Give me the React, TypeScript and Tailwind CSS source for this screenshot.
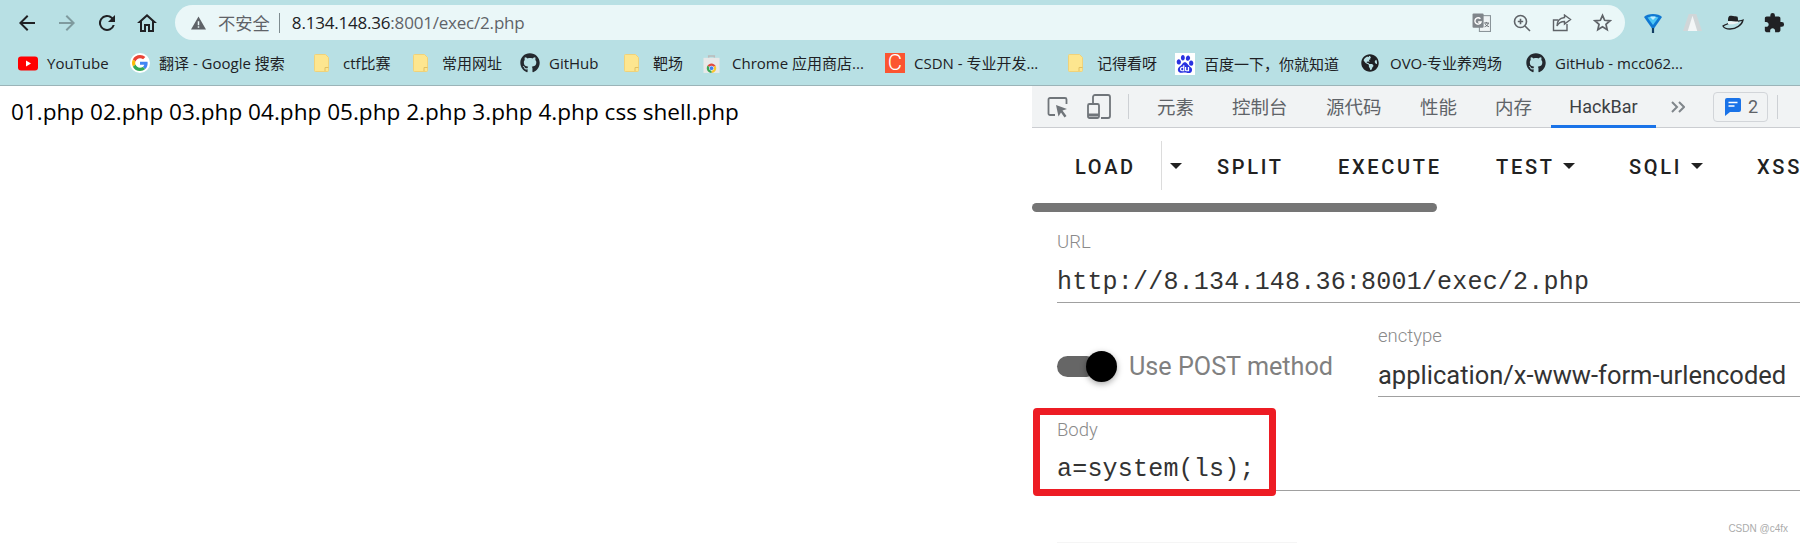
import { FaGithub, FaGlobeAmericas } from "react-icons/fa";
import { MdExtension } from "react-icons/md";
import { SiBaidu } from "react-icons/si";

const chromeFont = "font-['Open_Sans','Noto_Sans_CJK_SC',sans-serif]";
const cjkFont = "font-['Noto_Sans_CJK_SC','Open_Sans',sans-serif]";
const roboto = "font-['Roboto','Noto_Sans_CJK_SC',sans-serif]";
const mono = "font-['Liberation_Mono',monospace]";

const YouTubeIcon = () => (
  <svg viewBox="0 0 20 14" className="w-5 h-[15px]">
    <rect width="20" height="14" rx="3" fill="#f00" />
    <path d="M8 4l5 3-5 3z" fill="#fff" />
  </svg>
);

const GoogleIcon = () => (
  <div className="w-[20px] h-[20px] rounded-full bg-white flex items-center justify-center">
    <svg viewBox="0 0 48 48" className="w-[16px] h-[16px]">
      <path fill="#EA4335" d="M24 9.500c3.500 0 6.700 1.200 9.200 3.600l6.900-6.900C35.900 2.400 30.400 0 24 0 14.600 0 6.500 5.400 2.600 13.200l8 6.200C12.500 13.600 17.800 9.500 24 9.500z" />
      <path fill="#4285F4" d="M46.900 24.500c0-1.600-.1-3.100-.4-4.500H24v9h12.900c-.6 3-2.200 5.500-4.700 7.200l7.700 6C44.400 38 46.900 31.800 46.900 24.500z" />
      <path fill="#FBBC05" d="M10.500 28.600c-.5-1.500-.8-3-.8-4.600s.3-3.200.8-4.600l-8-6.200C.9 16.500 0 20.100 0 24s.9 7.500 2.600 10.800l7.900-6.200z" />
      <path fill="#34A853" d="M24 48c6.500 0 11.900-2.100 15.900-5.800l-7.700-6c-2.200 1.500-4.900 2.300-8.200 2.300-6.200 0-11.500-4.200-13.400-9.800l-8 6.200C6.500 42.600 14.600 48 24 48z" />
    </svg>
  </div>
);

const FolderIcon = () => (
  <svg viewBox="0 0 15 18" className="w-[15px] h-[18px]">
    <path d="M1.500.5h10l3 3v13a1 1 0 0 1-1 1h-12a1 1 0 0 1-1-1v-15a1 1 0 0 1 1-1z" fill="#fde68f" stroke="#f0d27a" />
    <path d="M11 17v-3.500h3.500" fill="none" stroke="#e2c062" />
  </svg>
);

const StoreIcon = () => (
  <svg viewBox="0 0 18 20" className="w-[17px] h-[19px]">
    <path d="M6 4V2h6v2" fill="none" stroke="#bbb" strokeWidth="1.500" />
    <rect x="0.500" y="4" width="17" height="16" fill="#e8e8e8" />
    <path d="M9 15L4.670 12.500A5 5 0 0 1 13.330 12.500z" fill="#e04a3f" />
    <path d="M9 15L13.330 12.500A5 5 0 0 1 9 20z" fill="#f7c62f" />
    <path d="M9 15L9 20A5 5 0 0 1 4.670 12.500z" fill="#3aa655" />
    <circle cx="9" cy="15" r="2.600" fill="#fff" />
    <circle cx="9" cy="15" r="2" fill="#3f82ef" />
  </svg>
);

const CsdnIcon = () => (
  <div className={`w-[20px] h-[20px] bg-[#fc5531] flex items-center justify-center text-white text-[22px] font-light leading-none ${roboto}`}>C</div>
);

const BaiduIcon = () => (
  <div className="w-[20px] h-[22px] bg-white flex items-center justify-center">
    <SiBaidu className="w-[18px] h-[18px] text-[#2932e1]" />
  </div>
);

const bookmarks = [
  { label: "YouTube", icon: <YouTubeIcon />, width: "w-[112px]" },
  { label: "翻译 - Google 搜索", icon: <GoogleIcon />, width: "w-[184px]" },
  { label: "ctf比赛", icon: <FolderIcon />, width: "w-[99px]" },
  { label: "常用网址", icon: <FolderIcon />, width: "w-[107px]" },
  { label: "GitHub", icon: <FaGithub className="w-5 h-5 text-[#24292f]" />, width: "w-[104px]" },
  { label: "靶场", icon: <FolderIcon />, width: "w-[79px]" },
  { label: "Chrome 应用商店...", icon: <StoreIcon />, width: "w-[182px]" },
  { label: "CSDN - 专业开发...", icon: <CsdnIcon />, width: "w-[183px]" },
  { label: "记得看呀", icon: <FolderIcon />, width: "w-[107px]" },
  { label: "百度一下，你就知道", icon: <BaiduIcon />, width: "w-[186px]" },
  { label: "OVO-专业养鸡场", icon: <FaGlobeAmericas className="w-[18px] h-[18px] text-[#202124]" />, width: "w-[165px]" },
  { label: "GitHub - mcc062...", icon: <FaGithub className="w-5 h-5 text-[#24292f]" />, width: "w-[175px]" },
];

const NavIcon = ({ d, color = "#202124" }: { d: string; color?: string }) => (
  <svg viewBox="0 0 24 24" className="w-6 h-6 shrink-0" fill={color}>
    <path d={d} />
  </svg>
);

const Caret = () => (
  <svg viewBox="0 0 12 6" className="w-3 h-[6px] shrink-0 mt-[1px]" fill="#212121">
    <path d="M0 0h12L6 6z" />
  </svg>
);

const App = () => {
  return (
    <div className={`w-[1800px] h-[543px] overflow-hidden bg-white flex flex-col relative ${chromeFont}`}>
      {/* Browser toolbar */}
      <div className="h-[45px] bg-[#b8e0e4] flex items-center pl-[15px] gap-[16px] shrink-0">
        <NavIcon d="M20 11H7.800l5.600-5.600L12 4l-8 8 8 8 1.400-1.400L7.800 13H20z" />
        <NavIcon color="#7f9a9e" d="M4 11h12.200l-5.600-5.600L12 4l8 8-8 8-1.400-1.400 5.600-5.600H4z" />
        <NavIcon d="M17.650 6.350A8 8 0 1 0 19.730 14h-2.080A6 6 0 1 1 12 6c1.660 0 3.140.69 4.220 1.780L13 11h7V4z" />
        <NavIcon d="M12 3L2 12h3v9h6v-6h2v6h6v-9h3zm5 16h-2v-6H9v6H7v-8.800l5-4.500 5 4.500z" />
        <div className="w-[1450px] h-[35px] rounded-full bg-[#eaf7f8] flex items-center pl-[16px] shrink-0">
          <svg viewBox="0 0 16 14" className="w-[15px] h-[14px] shrink-0" fill="#5f6368">
            <path d="M8 0l8 14H0zM7.200 5v4.500h1.600V5zm0 5.500V12h1.600v-1.500z" fillRule="evenodd" />
          </svg>
          <span className={`ml-[12px] text-[17.300px] text-[#5f6368] ${cjkFont}`}>不安全</span>
          <div className="w-px h-[20px] bg-[#7f8c90] ml-[9px]" />
          <span className="ml-[12px] text-[17px] text-[#202124] tracking-[-0.2px]">8.134.148.36</span>
          <span className="text-[17px] text-[#5f6368] tracking-[-0.2px]">:8001/exec/2.php</span>
          <div className="ml-auto flex items-center mr-[13px]">
            <svg viewBox="0 0 18 18" className="w-[19px] h-[19px]">
              <rect x="7" y="2.500" width="10.500" height="15" fill="#eef3f4" stroke="#8a9499" />
              <rect x="0.500" y="0.500" width="10.500" height="13.500" rx="1" fill="#80868b" />
              <path d="M8 5.500a3 3 0 1 0 .6 3H5.800" fill="none" stroke="#fff" strokeWidth="1.300" />
              <path d="M11.500 9.500h4.500M13.500 8.500v1M15.500 9.500c-.5 2-2 3-3.500 3.500M12.500 10.500c.7 1 2 2 3.500 2.500" fill="none" stroke="#5f6368" strokeWidth="0.900" />
            </svg>
            <svg viewBox="0 0 18 18" className="ml-[22px] w-[18px] h-[18px]" fill="none" stroke="#5f6368" strokeWidth="1.600">
              <circle cx="7.500" cy="7.500" r="6" />
              <path d="M12 12l5 5M7.500 4.800v5.400M4.800 7.500h5.400" />
            </svg>
            <svg viewBox="0 0 20 18" className="ml-[21px] w-[20px] h-[18px]" fill="none" stroke="#5f6368" strokeWidth="1.400">
              <path d="M15 10v6.500H1.500V6H6" />
              <path d="M12.500 1l6 4.500-6 4.500V7.500C9 7.500 6.500 9 5 12c0-5 3-8 7.500-8.500z" />
            </svg>
            <svg viewBox="0 0 24 24" className="ml-[21px] w-[19px] h-[19px]" fill="none" stroke="#5f6368" strokeWidth="2.200">
              <path d="M12 3l2.700 6.200 6.800.6-5.100 4.500 1.500 6.700L12 17.500 6.100 21l1.500-6.700L2.500 9.800l6.800-.6z" />
            </svg>
          </div>
        </div>
        <div className="flex items-center ml-[3px]">
          <svg viewBox="0 0 18 20" className="w-[18px] h-[20px]">
            <path d="M0 4C3 0 15 0 18 4L9 17z" fill="#0f78d2" />
            <path d="M3.500 4.500C6 3 12 3 14.500 4.500L9 12z" fill="#4cc5f5" />
            <path d="M6 4c1.500-.6 4.500-.6 6 0L9 7z" fill="#bfeeff" />
            <path d="M9 15v5" stroke="#123e63" strokeWidth="2.200" />
          </svg>
          <svg viewBox="0 0 20 20" className="ml-[21px] w-[19px] h-[19px]">
            <path d="M6 1h8l6 18H0z" fill="#d0d6d8" />
            <path d="M10 3l5 16H5z" fill="#f3f6f7" />
          </svg>
          <svg viewBox="0 0 22 15" className="ml-[20px] w-[22px] h-[15px]">
            <path d="M6 6c0-5 1-6 5-5s5-1 5 4v1z" fill="#202124" />
            <path d="M1 11c3-3 17-5 20-6-1 5-7 9-13 9-3 0-6-1-7-3z" fill="none" stroke="#202124" strokeWidth="1.300" />
            <path d="M6 6.500h10l0 1.500c-4 1.500-7 1.500-10 1z" fill="#eef3f4" />
          </svg>
          <MdExtension className="w-[22px] h-[22px] text-[#202124] ml-[19px]" />
        </div>
      </div>

      {/* Bookmarks */}
      <div className={`h-[41px] bg-[#b8e0e4] border-b border-[#9bb4b8] flex items-start pl-[18px] pt-[8px] shrink-0 text-[15px] leading-[20px] text-[#202124] ${chromeFont}`}>
        {bookmarks.map((b) => (
          <div key={b.label} className={`flex items-center shrink-0 whitespace-nowrap ${b.width}`}>
            <div className="w-[29px] shrink-0 flex items-center">{b.icon}</div>
            <span>{b.label}</span>
          </div>
        ))}
      </div>

      <div className="flex flex-1 min-h-0 relative">
        {/* Page */}
        <div className="w-[1032px] shrink-0 pl-[11px] pt-[11px] text-[22.570px] leading-[30px] text-black">
          01.php 02.php 03.php 04.php 05.php 2.php 3.php 4.php css shell.php
        </div>

        {/* DevTools */}
        <div className="flex-1 min-w-0 overflow-hidden relative">
          <div className={`h-[42px] bg-[#f1f3f4] border-b border-[#cbcdd1] flex items-center pl-[15px] text-[18.500px] text-[#5f6368] whitespace-nowrap ${cjkFont}`}>
            <svg viewBox="0 0 22 22" className="w-[22px] h-[22px] shrink-0" fill="none">
              <path d="M8 19H3a1.500 1.500 0 0 1-1.500-1.500v-14A1.500 1.500 0 0 1 3 2h15a1.500 1.500 0 0 1 1.500 1.500V8" stroke="#70757a" strokeWidth="1.800" />
              <path d="M9 9l11 4-4.500 1.500L19.500 20l-2 1.500-3.500-5-2.500 4z" fill="#70757a" />
            </svg>
            <svg viewBox="0 0 24 25" className="ml-[18px] w-[24px] h-[25px] shrink-0" fill="none" stroke="#70757a" strokeWidth="1.800">
              <path d="M6 10V3a2 2 0 0 1 2-2h13a2 2 0 0 1 2 2v19a2 2 0 0 1-2 2H14" />
              <rect x="1" y="10" width="11" height="14" rx="1.500" />
              <path d="M1 21h11" strokeWidth="3" />
            </svg>
            <div className="ml-[17px] w-px h-[25px] bg-[#cdd0d4] shrink-0" />
            <span className="ml-[28px] w-[37px]">元素</span>
            <span className="ml-[38px] w-[56px]">控制台</span>
            <span className="ml-[38px] w-[56px]">源代码</span>
            <span className="ml-[38px] w-[37px]">性能</span>
            <span className="ml-[38px] w-[37px]">内存</span>
            <div className="ml-[19px] w-[105px] h-[41px] flex items-center justify-center border-b-[3px] border-[#1a73e8] text-[#3c4043] relative top-[1px] shrink-0">
              <span className={`${roboto} text-[18px]`}>HackBar</span>
            </div>
            <svg viewBox="0 0 14 12" className="ml-[15px] w-[14px] h-[12px] shrink-0" fill="none" stroke="#80868b" strokeWidth="2">
              <path d="M1 1l5 5-5 5M8 1l5 5-5 5" />
            </svg>
            <div className="ml-[28px] w-[55px] h-[30px] rounded-[4px] border border-[#d2d5d9] flex items-center pl-[11px] shrink-0">
              <svg viewBox="0 0 16 18" className="w-[16px] h-[18px]">
                <path d="M2 0h12a2 2 0 0 1 2 2v10a2 2 0 0 1-2 2H5l-5 4V2a2 2 0 0 1 2-2z" fill="#1a73e8" />
                <path d="M3.500 4.500h9M3.500 8h6" stroke="#fff" strokeWidth="1.500" />
              </svg>
              <span className={`ml-[7px] text-[18px] text-[#5f6368] ${roboto}`}>2</span>
            </div>
            <div className="ml-[9px] w-px h-[24px] bg-[#cdd0d4] shrink-0" />
          </div>

          {/* HackBar buttons */}
          <div className={`h-[75px] flex items-center pl-[43px] text-[20px] font-medium tracking-[2.700px] text-[#212121] whitespace-nowrap ${roboto}`}>
            <span className="w-[60px] shrink-0 pt-[3px]">LOAD</span>
            <div className="ml-[26px] w-px h-[49px] bg-[#dcdcdc] shrink-0" />
            <div className="ml-[8px]"><Caret /></div>
            <span className="ml-[35px] w-[66px] shrink-0 pt-[3px]">SPLIT</span>
            <span className="ml-[55px] w-[103px] shrink-0 pt-[3px]">EXECUTE</span>
            <span className="ml-[55px] w-[57px] shrink-0 pt-[3px]">TEST</span>
            <div className="ml-[10px]"><Caret /></div>
            <span className="ml-[54px] w-[51px] shrink-0 pt-[3px]">SQLI</span>
            <div className="ml-[11px]"><Caret /></div>
            <span className="ml-[54px] pt-[3px]">XSS</span>
          </div>
          <div className="w-[405px] h-[9px] rounded-full bg-[#757575]" />

          {/* Form */}
          <div className={`pl-[25px] ${roboto}`}>
            <div className="mt-[20px] h-[20px] leading-[20px] text-[18.500px] text-[#8a8a8a] font-light">URL</div>
            <div className={`h-[51px] pt-[14px] leading-[34px] border-b border-[#a0a0a0] text-[25px] tracking-[0.200px] text-[#333333] whitespace-nowrap ${mono}`}>
              http://8.134.148.36:8001/exec/2.php
            </div>
            <div className="flex">
              <div className="w-[321px] shrink-0 pt-[33px] flex items-center h-[94px]">
                <div className="relative w-[40px] h-[21px] rounded-full bg-[#666666] shrink-0">
                  <div className="absolute left-[29px] top-[-5px] w-[31px] h-[31px] rounded-full bg-black shadow-[0_2px_6px_rgba(0,0,0,0.35)]" />
                </div>
                <span className="ml-[32px] text-[25.200px] text-[#808080] whitespace-nowrap">Use POST method</span>
              </div>
              <div className="flex-1 min-w-0">
                <div className="mt-[23px] h-[20px] leading-[20px] text-[18.500px] text-[#8a8a8a] font-light">enctype</div>
                <div className="h-[51px] pt-[11px] leading-[36px] border-b border-[#a0a0a0] text-[25.500px] text-[#333333] whitespace-nowrap">
                  application/x-www-form-urlencoded
                </div>
              </div>
            </div>
            <div className="mt-[23px] h-[20px] leading-[20px] text-[18.500px] text-[#8a8a8a] font-light">Body</div>
            <div className={`h-[51px] pt-[13px] leading-[34px] border-b border-[#a0a0a0] text-[25px] tracking-[0.200px] text-[#333333] whitespace-nowrap ${mono}`}>
              a=system(ls);
            </div>
            <div className="mt-[51px] w-[240px] h-px bg-[#f5f5f5]" />
          </div>

          {/* Annotation */}
          <div className="absolute left-[1px] top-[322px] w-[243px] h-[88px] rounded-[4px] border-[7px] border-[#ed1c24]" />
          <div className="absolute right-[12px] bottom-[7px] text-[10px] leading-[14px] text-[#ababab] font-['Liberation_Sans',sans-serif]">CSDN @c4fx</div>
        </div>
      </div>
    </div>
  );
};

export default App;
